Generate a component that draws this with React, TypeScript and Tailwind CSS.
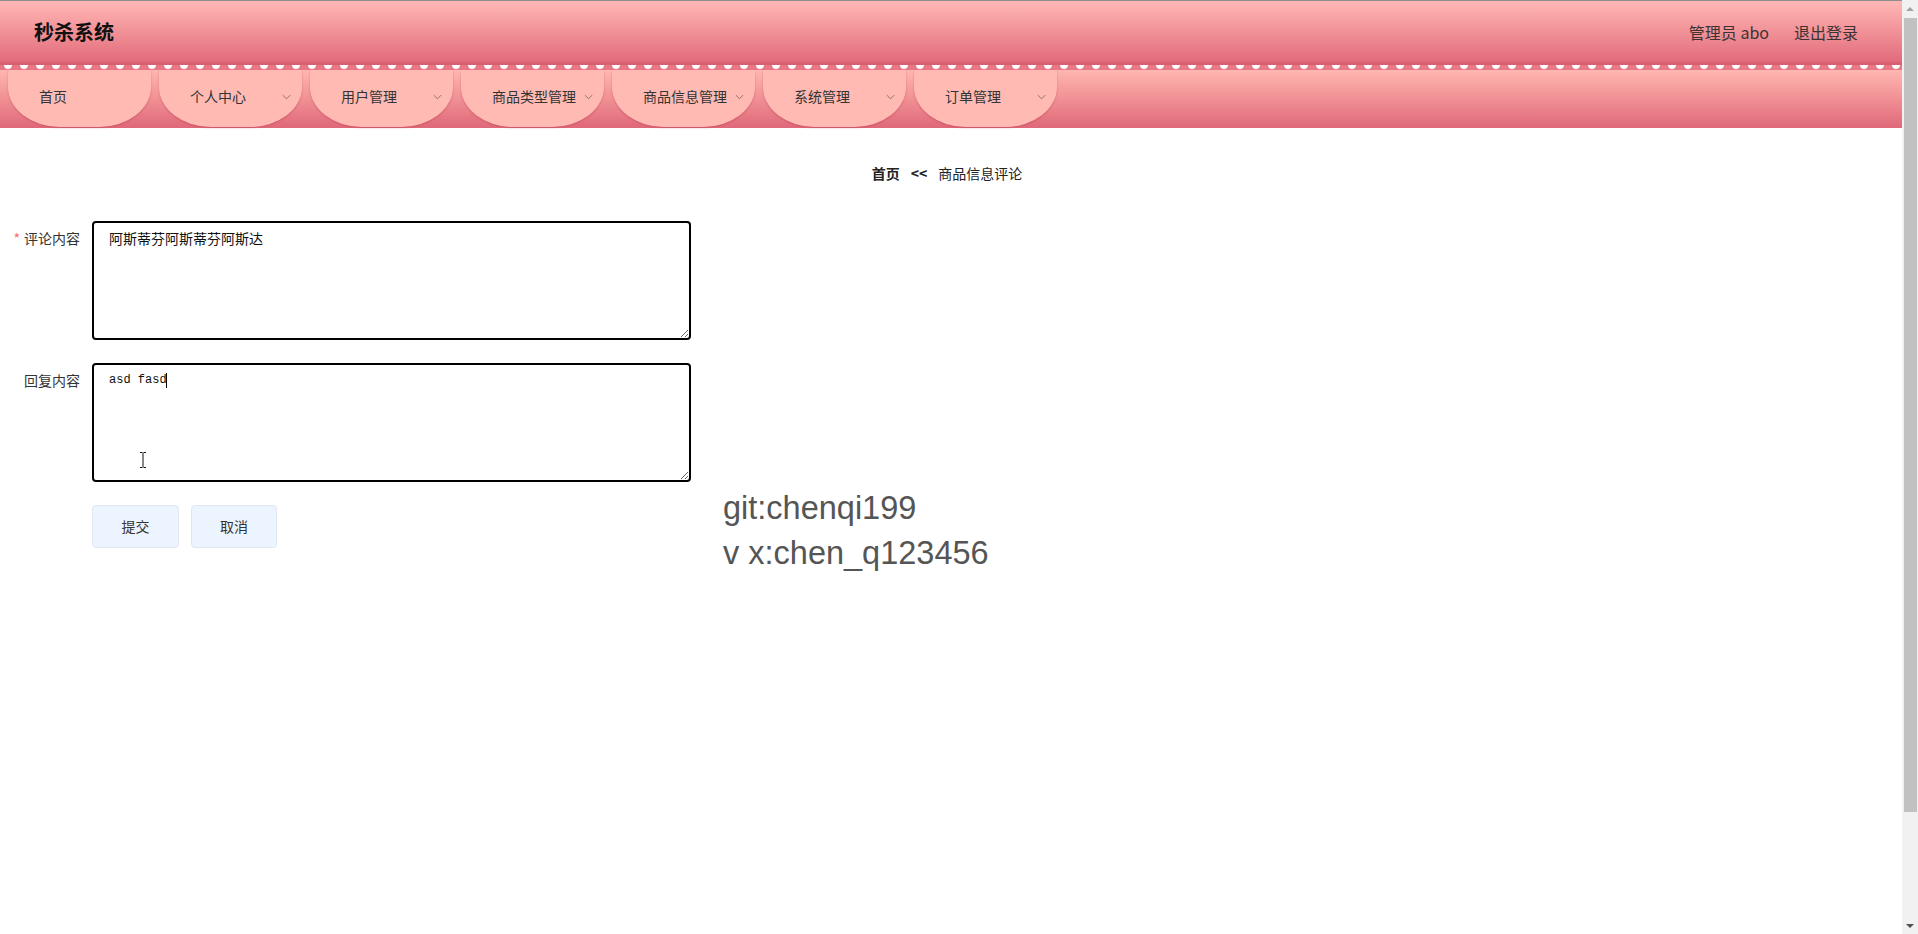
import React from 'react';

const menus = [
  { title: '首页', sub: false },
  { title: '个人中心', sub: true },
  { title: '用户管理', sub: true },
  { title: '商品类型管理', sub: true },
  { title: '商品信息管理', sub: true },
  { title: '系统管理', sub: true },
  { title: '订单管理', sub: true },
];

const cjk = "font-['Microsoft_YaHei','Noto_Sans_CJK_SC',sans-serif]";

function Chevron() {
  return (
    <svg viewBox="0 0 12 12" className="h-[11px] w-[11px]" fill="none" stroke="#8a6a6a" strokeWidth="1">
      <polyline points="2,4.5 6,8.5 10,4.5" />
    </svg>
  );
}

function IBeam() {
  return (
    <svg viewBox="0 0 8 16" className="h-[16px] w-[8px]" fill="none" stroke="#111" strokeWidth="1">
      <path d="M1 0.5h2.5M4.5 0.5H7M4 1v14M1 15.5h2.5M4.5 15.5H7" />
    </svg>
  );
}

// fake window scrollbar, as in the screenshot
function Scrollbar() {
  return (
    <aside className="flex w-[16px] shrink-0 flex-col bg-[#f1f1f1]">
      <div className="flex h-[17px] items-center justify-center">
        <svg viewBox="0 0 8 4" className="h-[4px] w-[8px]" fill="#a3a3a3">
          <polygon points="0,4 4,0 8,4" />
        </svg>
      </div>
      <div className="ml-[2px] mr-[1px] mt-[1px] h-[794px] bg-[#c1c1c1]" />
      <div className="flex-1" />
      <div className="flex h-[17px] items-center justify-center">
        <svg viewBox="0 0 8 4" className="h-[4px] w-[8px]" fill="#505050">
          <polygon points="0,0 8,0 4,4" />
        </svg>
      </div>
    </aside>
  );
}

export default function App() {
  return (
    <div className={`flex h-[934px] overflow-hidden bg-white text-[#333] ${cjk}`}>
      <main className="min-w-0 flex-1">
        {/* top bar */}
        <header className="border-t border-[#8c8c8c]">
          <div className="flex h-[61px] items-center justify-between bg-gradient-to-b from-[#ffb8b5] to-[#e16a7b] pl-[34px] pr-[44px]">
            <div className="text-[20px] font-bold leading-none text-[#111]">秒杀系统</div>
            <div className="flex items-center gap-[25px] text-[16px] text-[#3d3333]">
              <span>管理员 abo</span>
              <span>退出登录</span>
            </div>
          </div>

          {/* lace edge */}
          <div className="h-[8px] [background:linear-gradient(#d9616f,#d9616f)_0_0/100%_3px_no-repeat,radial-gradient(circle_at_8px_3px,#fff_3.5px,transparent_4.5px)_0_0/16px_8px_repeat-x,#e67886]" />

          {/* menu */}
          <nav className="flex h-[58px] items-start gap-[8px] bg-gradient-to-b from-[#ffb6b1] to-[#df6879] pl-[8px]">
            {menus.map((m) => (
              <div
                key={m.title}
                className="flex h-[57px] w-[143px] shrink-0 items-center rounded-t-[2px] rounded-b-[52px_40px] bg-[#ffbbb3] pb-[5px] pl-[31px] text-[14px] text-[#333] shadow-[0_1px_2px_rgba(170,40,60,0.35)]"
              >
                <span>{m.title}</span>
                {m.sub && (
                  <span className="ml-auto mr-[10px] flex">
                    <Chevron />
                  </span>
                )}
              </div>
            ))}
          </nav>
        </header>

        {/* breadcrumb */}
        <div className="mt-[35px] flex h-[20px] items-center justify-center pr-[8px] text-[14px] leading-[20px] text-[#222]">
          <span className="font-bold">首页</span>
          <span className="mx-[11px] font-bold">&lt;&lt;</span>
          <span>商品信息评论</span>
        </div>

        <div className="mt-[38px] flex items-start">
          {/* form */}
          <div className="flex flex-col gap-[23px]">
            <div className="flex items-start">
              <label className="w-[92px] pr-[12px] text-right text-[14px] leading-[34px] text-[#333]">
                <span className="mr-[4px] text-[#f56c6c]">*</span>评论内容
              </label>
              <textarea
                defaultValue="阿斯蒂芬阿斯蒂芬阿斯达"
                className={`h-[119px] w-[599px] rounded-[4px] border-2 border-black px-[15px] py-[5px] text-[14px] leading-[20px] text-[#111] outline-none ${cjk}`}
              />
            </div>

            <div className="flex items-start">
              <label className="w-[92px] pr-[12px] text-right text-[14px] leading-[34px] text-[#333]">回复内容</label>
              <div className="relative">
                <textarea
                  defaultValue="asd fasd"
                  className="block h-[119px] w-[599px] rounded-[4px] border-2 border-black px-[15px] py-[5px] font-['Liberation_Mono',monospace] text-[12px] leading-[20px] text-[#111] outline-none"
                />
                <span className="absolute left-[74px] top-[10px] h-[15px] w-px bg-black" />
                <span className="absolute left-[47px] top-[89px] flex">
                  <IBeam />
                </span>
              </div>
            </div>

            <div className="ml-[92px] flex gap-[12px]">
              <button className="h-[43px] w-[87px] rounded-[4px] border border-[#dfe7f1] bg-[#ecf5ff] text-[14px] text-[#333]">
                提交
              </button>
              <button className="h-[43px] w-[86px] rounded-[4px] border border-[#dfe7f1] bg-[#ecf5ff] text-[14px] text-[#333]">
                取消
              </button>
            </div>
          </div>

          {/* watermark */}
          <div className="ml-[32px] mt-[265px] font-['Liberation_Sans',Arial,sans-serif] text-[32.5px] leading-[45px] text-[#555]">
            <div>git:chenqi199</div>
            <div>v x:chen_q123456</div>
          </div>
        </div>
      </main>
      <Scrollbar />
    </div>
  );
}
